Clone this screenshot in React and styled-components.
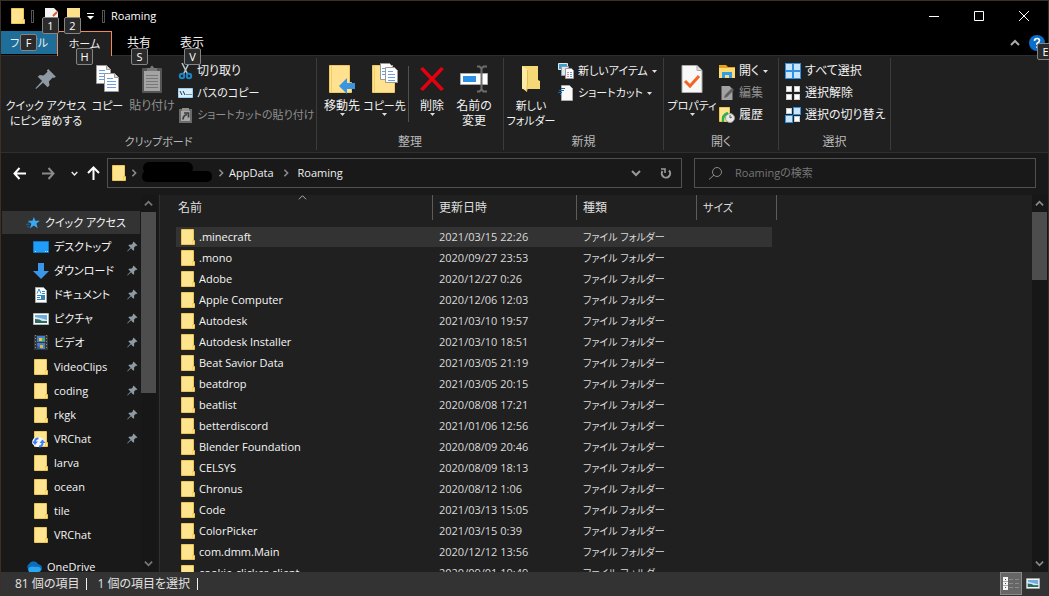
import React from "react";
import styled, { createGlobalStyle } from "styled-components";

const Global = createGlobalStyle`
  * { box-sizing: border-box; }
  html, body, #root { height: 100%; }
  body {
    margin: 0;
    background: #191919;
    color: #f0f0f0;
    font: 12px/16px "Open Sans", "Noto Sans CJK JP", sans-serif;
    font-feature-settings: "palt";
    overflow: hidden;
  }
  button, input { font: inherit; font-feature-settings: inherit; color: inherit; }
  button { background: none; border: 0; padding: 0; margin: 0; white-space: nowrap; }
  svg { display: block; flex: none; }
  ul, ol { list-style: none; margin: 0; padding: 0; }
`;

const Window = styled.div`
  height: 100vh;
  display: flex;
  flex-direction: column;
  border: solid #3c2f28;
  border-width: 1px 1px 0;
`;

/* Title bar */
const TitleBar = styled.header`
  flex: none;
  height: 30px;
  background: #000;
  display: flex;
  align-items: center;
  padding: 0 2px 0 10px;
`;
const TitleRule = styled.span`
  width: 3px;
  height: 13px;
  border: 1px solid #555;
  margin: 0 6px;
`;
const QuickButton = styled.button`
  position: relative;
  width: ${(p) => p.$width || 22}px;
  height: 22px;
  display: grid;
  place-items: center;
`;
const Title = styled.h1`
  margin: 0;
  flex: 1;
  font-size: 11px;
  line-height: 16px;
  font-weight: 400;
  color: #fff;
`;
const Caption = styled.button`
  width: 45px;
  height: 30px;
  display: grid;
  place-items: center;
`;
const KeyTip = styled.span`
  position: absolute;
  z-index: 2;
  left: ${(p) => p.$left}px;
  top: ${(p) => p.$top}px;
  width: 17px;
  height: 17px;
  border: 1px solid #858585;
  border-radius: 2px;
  background: #2b2b2b;
  color: #fff;
  font-size: 11px;
  line-height: 15px;
  text-align: center;
`;

/* Tabs */
const TabBar = styled.nav`
  flex: none;
  height: 24px;
  background: #000;
  display: flex;
`;
const Tab = styled.button`
  position: relative;
  width: ${(p) => p.$width}px;
  height: ${(p) => (p.$active ? 25 : 23)}px;
  font-size: ${(p) => (p.$kana ? 11 : 12)}px;
  line-height: 22px;
  background: ${(p) => (p.$file ? "#1e6e99" : p.$active ? "#202020" : "transparent")};
  border: solid ${(p) => (p.$active ? "#ef8a5c" : "transparent")};
  border-width: ${(p) => (p.$active ? "1px 1px 0" : "0")};
  z-index: ${(p) => (p.$active ? 1 : "auto")};
`;
const TabTools = styled.div`
  margin-left: auto;
  display: flex;
  align-items: center;
  gap: 9px;
`;
const HelpButton = styled.button`
  position: relative;
  width: 19px;
  height: 16px;
`;

/* Ribbon */
const Ribbon = styled.section`
  flex: none;
  height: 98px;
  display: flex;
  background: #202020;
  border-top: 1px solid #2d2d2d;
  border-bottom: 1px solid #2f2f2f;
`;
const Group = styled.div`
  flex: none;
  width: ${(p) => p.$width}px;
  display: flex;
  flex-direction: column;
  margin: 2px 0;
  border-right: 1px solid #3c3c3c;
`;
const GroupBody = styled.div`
  height: 76px;
  display: flex;
  padding: 2px 0 0 ${(p) => p.$pad}px;
`;
const GroupName = styled.div`
  text-align: center;
  color: #b8b8b8;
  font-size: ${(p) => (p.$kana ? 11 : 12)}px;
  line-height: 16px;
`;
const BigButton = styled.button`
  position: relative;
  width: ${(p) => p.$width}px;
  display: flex;
  flex-direction: column;
  align-items: center;
  font-size: ${(p) => (p.$kana ? 11 : 12)}px;
  line-height: 15px;
  color: ${(p) => (p.$off ? "#8f8f8f" : "#f2f2f2")};
`;
const BigIcon = styled.span`
  height: 38px;
  display: flex;
  align-items: center;
`;
const Divider = styled.span`
  width: 1px;
  height: 56px;
  margin: 6px 2px;
  background: #505050;
`;
const SmallColumn = styled.div`
  display: flex;
  flex-direction: column;
  padding-left: 2px;
`;
const SmallButton = styled.button`
  height: 22px;
  display: flex;
  align-items: center;
  gap: 4px;
  font-size: ${(p) => (p.$kana ? 11 : 12)}px;
  color: ${(p) => (p.$off ? "#8f8f8f" : "#f2f2f2")};
`;

/* Address row */
const AddressRow = styled.div`
  flex: none;
  height: 42px;
  display: flex;
  align-items: center;
  padding: 0 12px 2px 10px;
`;
const Arrow = styled.button`
  width: ${(p) => p.$width}px;
  height: 24px;
  display: grid;
  place-items: center;
`;
const AddressBox = styled.div`
  flex: 569;
  height: 30px;
  margin-right: 12px;
  border: 1px solid #505050;
  display: flex;
  align-items: center;
  padding-left: 4px;
`;
const Crumb = styled.button`
  color: #f0f0f0;
  font-size: 11px;
`;
const CrumbGap = styled.span`
  width: ${(p) => p.$width}px;
  display: grid;
  place-items: center;
`;
const AddressTools = styled.div`
  margin-left: auto;
  display: flex;
  align-items: center;
  height: 28px;
`;
const SearchBox = styled.label`
  flex: 326;
  height: 30px;
  border: 1px solid #505050;
  display: flex;
  align-items: center;
  gap: 13px;
  padding-left: 14px;
`;
const SearchInput = styled.input`
  flex: 1;
  min-width: 0;
  border: 0;
  padding: 0;
  outline: 0;
  background: transparent;
  font-size: 11px;
  &::placeholder { color: #777; opacity: 1; }
`;

/* Content */
const Body = styled.div`
  flex: 1;
  min-height: 0;
  display: flex;
`;
const Sidebar = styled.aside`
  flex: none;
  width: 159px;
  display: flex;
  border-right: 1px solid #303030;
  padding-right: 2px;
`;
const Tree = styled.ul`
  flex: 1;
  min-width: 0;
  padding: 16px 1px 0 1px;
  overflow: hidden;
`;
const TreeItem = styled.li`
  height: 24px;
  margin-top: ${(p) => (p.$gap ? 8 : 0)}px;
`;
const TreeLink = styled.a`
  height: 23px;
  display: flex;
  align-items: center;
  gap: 5px;
  padding: 0 2px 0 ${(p) => (p.$root ? 24 : 31)}px;
  background: ${(p) => (p.$selected ? "#333" : "transparent")};
  color: #f5f5f5;
  text-decoration: none;
  font-size: 11px;
  white-space: nowrap;
  & > span { flex: 1; }
`;
const ScrollTrack = styled.div`
  flex: none;
  width: 16px;
  background: #171717;
  display: flex;
  flex-direction: column;
  align-items: flex-start;
`;
const ScrollButton = styled.button`
  flex: none;
  height: 17px;
  width: 15px;
  display: grid;
  place-items: center;
`;
const Thumb = styled.div`
  width: 15px;
  height: ${(p) => p.$share}%;
  margin-bottom: auto;
  background: #4d4d4d;
`;
const Files = styled.main`
  flex: 1;
  min-width: 0;
  display: flex;
  background: #202020;
  overflow: hidden;
`;
const FileScroll = styled.div`
  flex: 1;
  overflow: hidden;
  padding-left: 16px;
`;
const Table = styled.table`
  width: 601px;
  table-layout: fixed;
  border-collapse: separate;
  border-spacing: 0;
`;
const Head = styled.th`
  position: relative;
  height: 25px;
  padding: 0 0 0 ${(p) => (p.$first ? 2 : 6)}px;
  border-right: 1px solid #5c5c5c;
  font-weight: 400;
  font-size: ${(p) => (p.$kana ? 11 : 12)}px;
  text-align: left;
  color: #dedede;
  & > svg { position: absolute; left: 122px; top: -2px; }
`;
const Spacer = styled.td`
  height: 7px;
  padding: 0;
`;
const Row = styled.tr`
  height: 21px;
  --row: ${(p) => (p.$selected ? "#333" : "transparent")};
`;
const Cell = styled.td`
  height: 21px;
  padding: 0 0 0 6px;
  border-bottom: 1px solid #202020;
  background: var(--row);
  color: #dadada;
  font-size: ${(p) => (p.$kana ? 10 : 11)}px;
  line-height: 16px;
  white-space: nowrap;
  &:last-child {
    padding: 0 5px 0 0;
    background-clip: content-box;
  }
`;
const FileName = styled.div`
  display: flex;
  align-items: center;
  gap: 4px;
  margin-left: -1px;
  color: #f5f5f5;
`;

/* Status bar */
const StatusBar = styled.footer`
  flex: none;
  height: 24px;
  background: #333;
  color: #e2e2e2;
  display: flex;
  align-items: center;
  padding: 0 4px 0 14px;
  & > span { padding-right: 7px; margin-right: 10px; line-height: 12px; border-right: 1px solid #f0f0f0; }
`;
const Views = styled.div`
  margin-left: auto;
  display: flex;
  height: 24px;
`;
const ViewButton = styled.button`
  width: 22px;
  height: 23px;
  display: grid;
  place-items: center;
  border: 1px solid ${(p) => (p.$on ? "#8a8a8a" : "transparent")};
  background: ${(p) => (p.$on ? "#666" : "transparent")};
`;

/* Icons */
const Folder = ({ sync }) => (
  <svg width="14" height="16" viewBox="0 0 14 16" overflow="visible">
    <path d="M.5.5h12v11h1v4H.5z" fill="#ffe48f" stroke="#eec54f" />
    <path d="M11.500 11v4" stroke="#f7d365" />
    {sync && (
      <g transform="translate(-2 0)">
        <path d="M0 12q0-6 6-6t7 6q-1 4-6 4t-7-4z" fill="#f6f8ff" />
        <path d="M6.500 7.500Q3 7 3 11.500M7 15.500q3.500 0 3.500-4" stroke="#3f7ff2" strokeWidth="2" fill="none" />
        <path d="M0 10.500h6l-3 3.500zM7.500 12h6l-3-3.500z" fill="#3f7ff2" />
      </g>
    )}
  </svg>
);
const Pin = ({ size = 11 }) => (
  <svg width={size} height={size} viewBox="0 0 20 20" fill="#8d9aa3">
    <path d="M12 1l7 7-1.800 1-1-.4-3.600 3.600.6 3.500-1.700 1.800-4.200-4.200L1 19l-.6-.6 6-6.500L2.500 8l1.800-1.700 3.500.6 3.600-3.600-.6-1z" />
  </svg>
);
const Chevron = ({ d = "down", color = "#cfcfcf", w = 9, sw = 2 }) => {
  const paths = { down: "M1 3l4 4 4-4", up: "M1 7l4-4 4 4", right: "M3 1l4 4-4 4" };
  return (
    <svg width={w} height={w} viewBox="0 0 10 10" fill="none" stroke={color} strokeWidth={sw}>
      <path d={paths[d]} />
    </svg>
  );
};
const Caret = () => (
  <svg width="5" height="3" viewBox="0 0 5 3"><path d="M0 0h5L2.500 3z" fill="#ddd" /></svg>
);
const Sheet = ({ x, y }) => (
  <g transform={`translate(${x} ${y})`}>
    <path d="M.5.5h10l4 4v14H.5z" fill="#fff" stroke="#9a9a9a" />
    <path d="M10.500.5v4h4" fill="#ddd" stroke="#9a9a9a" />
    <path d="M3 5.500h6M3 8.500h9M3 11.500h9M3 14.500h9" stroke="#6a9fe6" />
  </g>
);
const CopyIcon = () => (
  <svg width="26" height="30" viewBox="0 0 26 30"><Sheet x={1} y={1} /><Sheet x={9} y={9} /></svg>
);
const PasteIcon = () => (
  <svg width="22" height="30" viewBox="0 0 22 30">
    <rect x="1" y="4" width="20" height="25" rx="1" fill="#555" />
    <rect x="3" y="7" width="16" height="20" fill="#a4a4a4" />
    <path d="M6 7V4h3q2-5 4 0h3v3z" fill="#777" />
    <path d="M5 11.500h12M5 14.500h12M5 17.500h12M5 20.500h12M5 23.500h12" stroke="#777" />
  </svg>
);
const CutIcon = () => (
  <svg width="15" height="17" viewBox="0 0 15 17" fill="none">
    <path d="M4 0l5.500 11M11 0L5.500 11" stroke="#b9c6d0" strokeWidth="1.500" />
    <circle cx="4" cy="13" r="2.200" stroke="#1787c9" strokeWidth="2" />
    <circle cx="11" cy="13" r="2.200" stroke="#1787c9" strokeWidth="2" />
  </svg>
);
const PathIcon = () => (
  <svg width="15" height="10" viewBox="0 0 15 10">
    <path d="M.5.5h14v9H.5z" fill="#d9edfb" stroke="#9ad0f5" />
    <path d="M2 3l2 4M5 3l2 4M8.500 6.500h1M10.500 6.500h1M12.500 6.500h1" stroke="#14324a" />
  </svg>
);
const PasteLinkIcon = () => (
  <svg width="15" height="16" viewBox="0 0 15 16">
    <path d="M1 2h13v14H1z" fill="#6a6a6a" /><path d="M3 4h9v10H3z" fill="#a8a8a8" /><path d="M4 1h7v3H4z" fill="#909090" />
    <path d="M5 12.500q0-4 4-5M6 6h4.500v4.500" stroke="#3c3c3c" strokeWidth="1.700" fill="none" />
  </svg>
);
const BigFolder = ({ kind }) => (
  <svg width="28" height="32" viewBox="0 0 28 32">
    <path d="M1.500 2.500h20v17h2v10h-22z" fill="#ffe190" stroke="#eec860" />
    <path d="M3.500 3v26" stroke="#f3d067" />
    {kind === "move" ? (
      <path d="M11 23l8-8v5h8v6h-8v5z" fill="#3a96e3" />
    ) : (
      <g transform="translate(9 0)"><path d="M.5.500h9l3 3v13H.5z" fill="#fff" stroke="#999" /><path d="M2 5.500h3M2 8.500h3M2 11.500h3" stroke="#6a9fe6" /><path d="M5.500 4.500h9l3 3v12H5.500z" fill="#fff" stroke="#999" /><path d="M8 8.500h5M8 11.500h7M8 14.500h7M8 17.500h7" stroke="#6a9fe6" /></g>
    )}
  </svg>
);
const DeleteIcon = () => (
  <svg width="26" height="28" viewBox="0 0 26 28"><path d="M1 4l3-2 9 9.500L22 2l3 2-9.500 10L25 24l-3 2-9-9.500L4 26l-3-2 9.500-10z" fill="#e3000f" /></svg>
);
const RenameIcon = () => (
  <svg width="30" height="28" viewBox="0 0 30 28">
    <path d="M1.500 8.500h27v11h-27z" fill="#fff" stroke="#aaa" /><path d="M4 11h13v6H4z" fill="#2d8fe6" />
    <path d="M18 1.500h2.500l2 2 2-2H28M22.500 3v22M18 26.500h2.500l2-2 2 2H28" fill="none" stroke="#6c6c6c" strokeWidth="2" />
  </svg>
);
const NewFolderIcon = () => (
  <svg width="20" height="28" viewBox="0 0 20 28">
    <path d="M1 1h16v14l2 1v8H1z" fill="#f7d877" /><path d="M1 1l6 4v13l-1 9-5-4z" fill="#ffeaa5" /><path d="M6.500 5v14l-1 7" stroke="#e5bd51" fill="none" />
  </svg>
);
const NewItemIcon = () => (
  <svg width="16" height="16" viewBox="0 0 16 16">
    <path d="M.5.500h9v6h-9z" fill="#3aa0cc" stroke="#e1e9ef" /><path d="M3.500 3.500h7v9h-7z" fill="#dce7ef" stroke="#8f9aa3" />
    <path d="M7.500 5.500h6l2 2v8h-8z" fill="#fff" stroke="#999" /><path d="M9 9.500h2M9 11.500h2M9 13.500h2" stroke="#dd8a8a" /><path d="M12 9.500h2M12 11.500h2M12 13.500h2" stroke="#6a9fe6" />
  </svg>
);
const ShortcutIcon = () => (
  <svg width="16" height="16" viewBox="0 0 16 16">
    <path d="M3.500.500h8l3 3v12h-11z" fill="#fafafa" stroke="#aaa" /><path d="M3 3.500h4M1 5.500h5M0 7.500h4M2 9.500h1" stroke="#1565ad" strokeWidth="1.200" />
  </svg>
);
const PropertiesIcon = () => (
  <svg width="22" height="30" viewBox="0 0 22 30">
    <path d="M1 1.500h15l5 5v22H1z" fill="#f8f8f8" stroke="#aaa" /><path d="M16 1.500v5h5" fill="#ddd" stroke="#aaa" />
    <path d="M4 17l5 5 9-10" fill="none" stroke="#f26522" strokeWidth="3" />
  </svg>
);
const OpenIcon = () => (
  <svg width="16" height="15" viewBox="0 0 16 15">
    <path d="M0 1h7l2 2h7v4H0z" fill="#e5a31b" /><path d="M0 4h16v10H0z" fill="#ffdc73" /><path d="M3 8h10v6h-3v-3H6v3H3z" fill="#359de8" />
  </svg>
);
const EditIcon = () => (
  <svg width="16" height="16" viewBox="0 0 16 16"><path d="M2.500 1h8l3 3v11h-11z" fill="#a2a2a2" /><path d="M5 13l1-3 7-7 2 2-7 7z" fill="#5f5f5f" /></svg>
);
const HistoryIcon = () => (
  <svg width="16" height="16" viewBox="0 0 16 16">
    <path d="M.5.500h10v14H.5z" fill="#ffe48f" stroke="#eec54f" /><circle cx="11" cy="11" r="4.500" fill="#e8e8e8" stroke="#9a9a9a" />
    <path d="M11 8v3l2-1" stroke="#555" fill="none" /><path d="M4 15q-1-7 5-9" stroke="#2bb24c" strokeWidth="2.500" fill="none" />
  </svg>
);
const SelectIcon = ({ on }) => (
  <svg width="16" height="16" viewBox="0 0 16 16">
    {[[0, 0], [8, 0], [0, 8], [8, 8]].map(([x, y], i) => on.includes(i)
      ? <g key={i}><rect x={x} y={y} width="8" height="8" fill="#2f91df" /><rect x={x + 1} y={y + 1} width="6" height="6" fill="#c8e5fb" /></g>
      : <rect key={i} x={x + 1.5} y={y + 1.5} width="5" height="5" fill="#fff" stroke="#ccc" />)}
  </svg>
);
const Straight = ({ rotate = 0, color = "#fff" }) => (
  <svg width="13" height="13" viewBox="0 0 13 13" fill="none" stroke={color} strokeWidth="2">
    <g transform={`rotate(${rotate} 6.5 6.5)`}><path d="M13 6.500H1.500M6.500 1L1.500 6.500l5 5.500" /></g>
  </svg>
);
const StarIcon = () => (
  <svg width="14" height="12" viewBox="0 0 16 14">
    <path d="M9 0l1.700 4.500H16l-4 3 1.500 5.500L9 10l-4.500 3.500L6 8 2 4.500h5.300z" fill="#39a9f2" /><path d="M0 8.500h4M2 6.500h3M1 11.500h3" stroke="#1875bb" />
  </svg>
);
const DesktopIcon = () => (
  <svg width="16" height="12" viewBox="0 0 16 12"><path d="M.5.500h15v11H.5z" fill="#1e9dfb" stroke="#1374c3" /><path d="M2 10.500h1M12 10.500h1M14 10.500h1" stroke="#bfe3ff" /></svg>
);
const DownloadIcon = () => (
  <svg width="16" height="16" viewBox="0 0 16 16"><path d="M5 0h6v8h5l-8 8-8-8h5z" fill="#3a96e6" /></svg>
);
const DocIcon = () => (
  <svg width="16" height="16" viewBox="0 0 16 16">
    <path d="M2.500.500h8l3 3v12h-11z" fill="#fff" stroke="#aaa" /><path d="M4 6.500L6 2l2 4.500M9 4.500h3M9 6.500h3M4 8.500h8M4 10.500h3M4 12.500h8" stroke="#2b8bd0" fill="none" /><path d="M8 9h4v3H8z" fill="#3f84a8" />
  </svg>
);
const PictureIcon = ({ w = 16, h = 12 }) => (
  <svg width={w} height={h} viewBox="0 0 16 12">
    <path d="M.5.500h15v11H.5z" fill="#fff" stroke="#b5b5b5" /><path d="M2 2h12v8H2z" fill="#6eaedc" /><path d="M2 4l5 1 7 2v1H2z" fill="#d8e9f2" /><path d="M2 6q5 0 7 2h5v2H2z" fill="#2f6a60" />
  </svg>
);
const VideoIcon = () => (
  <svg width="16" height="15" viewBox="0 0 16 15">
    <path d="M1 0h14v15H1z" fill="#383838" /><path d="M4 1h8v6H4zM4 8h8v6H4z" fill="#3e7fd0" />
    <path d="M6 3h3v3H6z" fill="#e9c43c" /><path d="M9 3h3v3H9z" fill="#4fae4f" /><path d="M4 10l4 4H4z" fill="#2d5c9c" /><path d="M7 10h3v3H7z" fill="#d9b93b" />
    <path d="M2.500 0v15M13.500 0v15" stroke="#888" strokeDasharray="1 2" />
  </svg>
);
const CloudIcon = () => (
  <svg width="16" height="11" viewBox="0 0 16 11"><path d="M3 9a3.500 3.500 0 0 1 0-6 5 5 0 0 1 9 0q4 1 4 4t-4 4H4z" fill="#0f6cbd" /><path d="M3 11q-2-3 1-5 3-1 5 0 5-1 6 2 0 3-3 3z" fill="#29a7ef" /></svg>
);
const DetailsIcon = () => (
  <svg width="16" height="13" viewBox="0 0 16 13">
    <path d="M0 0h5v13H0z" fill="#f4f4f4" /><path d="M0 4.500h5M0 8.500h5" stroke="#aaa" /><path d="M2 2.500h1M2 6.500h1" stroke="#444" /><path d="M2 10.500h1" stroke="#a33" /><path d="M6 2.500h4M12 2.500h4M6 6.500h4M12 6.500h4M6 10.500h4M12 10.500h4" stroke="#8a8a8a" />
  </svg>
);
const RefreshIcon = () => (
  <svg width="12" height="12" viewBox="0 0 12 12" fill="none" stroke="#999" strokeWidth="2">
    <path d="M9 3.500A4.200 4.200 0 1 1 2.500 4" />
    <path d="M1 2h4v4" strokeWidth="1.600" />
  </svg>
);

const places = [
  ["デスクトップ", <DesktopIcon />, true],
  ["ダウンロード", <DownloadIcon />, true],
  ["ドキュメント", <DocIcon />, true],
  ["ピクチャ", <PictureIcon />, true],
  ["ビデオ", <VideoIcon />, true],
  ["VideoClips", <Folder />, true],
  ["coding", <Folder />, true],
  ["rkgk", <Folder />, true],
  ["VRChat", <Folder sync />, true],
  ["larva", <Folder />],
  ["ocean", <Folder />],
  ["tile", <Folder />],
  ["VRChat", <Folder />],
];
const PlaceIcon = styled.span`
  &&& { flex: none; }
  width: 16px;
  display: grid;
  place-items: center;
`;

const files = [
  [".minecraft", "2021/03/15 22:26"],
  [".mono", "2020/09/27 23:53"],
  ["Adobe", "2020/12/27 0:26"],
  ["Apple Computer", "2020/12/06 12:03"],
  ["Autodesk", "2021/03/10 19:57"],
  ["Autodesk Installer", "2021/03/10 18:51"],
  ["Beat Savior Data", "2021/03/05 21:19"],
  ["beatdrop", "2021/03/05 20:15"],
  ["beatlist", "2020/08/08 17:21"],
  ["betterdiscord", "2021/01/06 12:56"],
  ["Blender Foundation", "2020/08/09 20:46"],
  ["CELSYS", "2020/08/09 18:13"],
  ["Chronus", "2020/08/12 1:06"],
  ["Code", "2021/03/13 15:05"],
  ["ColorPicker", "2021/03/15 0:39"],
  ["com.dmm.Main", "2020/12/12 13:56"],
  ["cookie-clicker-client", "2020/09/01 19:49"],
];

const Big = ({ icon, lines, menu, ...rest }) => (
  <BigButton {...rest}>
    <BigIcon>{icon}</BigIcon>
    {lines.map((l) => <span key={l}>{l}</span>)}
    {menu && <Caret />}
  </BigButton>
);
const Small = ({ icon, text, menu, ...rest }) => (
  <SmallButton {...rest}>{icon}<span>{text}</span>{menu && <Caret />}</SmallButton>
);

export default function App() {
  return (
    <>
      <Global />
      <Window>
        <TitleBar>
          <Folder />
          <TitleRule />
          <QuickButton aria-label="プロパティ">
            <svg width="13" height="16" viewBox="0 0 13 16"><path d="M0 0h9l4 4v12H0z" fill="#f4f4f4" /><path d="M8 8l4-4" stroke="#e2582a" strokeWidth="2" /></svg>
            <KeyTip $left={2} $top={12}>1</KeyTip>
          </QuickButton>
          <QuickButton aria-label="新しいフォルダー">
            <svg width="13" height="16" viewBox="0 0 13 16"><path d="M0 0h13v16H0z" fill="#ffe08a" /></svg>
            <KeyTip $left={2} $top={12}>2</KeyTip>
          </QuickButton>
          <QuickButton $width={12} aria-label="カスタマイズ">
            <svg width="7" height="7" viewBox="0 0 7 7"><path d="M0 .5h7" stroke="#fff" /><path d="M0 3h7L3.500 6.500z" fill="#fff" /></svg>
          </QuickButton>
          <TitleRule />
          <Title>Roaming</Title>
          <Caption aria-label="最小化"><svg width="10" height="10"><path d="M0 5.500h10" stroke="#fff" /></svg></Caption>
          <Caption aria-label="最大化"><svg width="10" height="10"><path d="M.5.500h9v9h-9z" fill="none" stroke="#fff" /></svg></Caption>
          <Caption aria-label="閉じる"><svg width="10" height="10"><path d="M0 0l10 10M10 0L0 10" stroke="#fff" /></svg></Caption>
        </TitleBar>

        <TabBar>
          <Tab $width={56} $file $kana>ファイル<KeyTip $left={19} $top={3}>F</KeyTip></Tab>
          <Tab $width={55} $active $kana>ホーム<KeyTip $left={18} $top={16}>H</KeyTip></Tab>
          <Tab $width={54}>共有<KeyTip $left={19} $top={17}>S</KeyTip></Tab>
          <Tab $width={52}>表示<KeyTip $left={18} $top={17}>V</KeyTip></Tab>
          <TabTools>
            <Chevron d="up" w={10} color="#aaa" />
            <HelpButton aria-label="ヘルプ">
              <svg width="16" height="16" viewBox="0 0 16 16"><circle cx="8" cy="8" r="8" fill="#0b6fcb" /><path d="M5.500 6q0-2.500 2.500-2.500t2.500 2q0 1.500-2.500 3V10M8 11.500v1.500" fill="none" stroke="#fff" strokeWidth="1.600" /></svg>
              <KeyTip $left={8} $top={8}>E</KeyTip>
            </HelpButton>
          </TabTools>
        </TabBar>

        <Ribbon>
          <Group $width={316}>
            <GroupBody $pad={4}>
              <Big $width={82} $kana icon={<Pin size={22} />} lines={["クイック アクセス", "にピン留めする"]} />
              <Big $width={41} $kana icon={<CopyIcon />} lines={["コピー"]} />
              <Big $width={48} $off icon={<PasteIcon />} lines={["貼り付け"]} />
              <SmallColumn>
                <Small icon={<CutIcon />} text="切り取り" />
                <Small $kana icon={<PathIcon />} text="パスのコピー" />
                <Small $kana $off icon={<PasteLinkIcon />} text="ショートカットの貼り付け" />
              </SmallColumn>
            </GroupBody>
            <GroupName $kana>クリップボード</GroupName>
          </Group>
          <Group $width={187}>
            <GroupBody $pad={4}>
              <Big $width={42} menu icon={<BigFolder kind="move" />} lines={["移動先"]} />
              <Big $width={43} menu icon={<BigFolder kind="copy" />} lines={["コピー先"]} $kana />
              <Divider />
              <Big $width={42} menu icon={<DeleteIcon />} lines={["削除"]} />
              <Big $width={42} icon={<RenameIcon />} lines={["名前の", "変更"]} />
            </GroupBody>
            <GroupName>整理</GroupName>
          </Group>
          <Group $width={160}>
            <GroupBody $pad={2}>
              <Big $width={50} $kana icon={<NewFolderIcon />} lines={["新しい", "フォルダー"]} />
              <SmallColumn>
                <Small $kana menu icon={<NewItemIcon />} text="新しいアイテム" />
                <Small $kana menu icon={<ShortcutIcon />} text="ショートカット" />
              </SmallColumn>
            </GroupBody>
            <GroupName>新規</GroupName>
          </Group>
          <Group $width={115}>
            <GroupBody $pad={3}>
              <Big $width={50} $kana menu icon={<PropertiesIcon />} lines={["プロパティ"]} />
              <SmallColumn>
                <Small menu icon={<OpenIcon />} text="開く" />
                <Small $off icon={<EditIcon />} text="編集" />
                <Small icon={<HistoryIcon />} text="履歴" />
              </SmallColumn>
            </GroupBody>
            <GroupName>開く</GroupName>
          </Group>
          <Group $width={112}>
            <GroupBody $pad={4}>
              <SmallColumn>
                <Small icon={<SelectIcon on={[0, 1, 2, 3]} />} text="すべて選択" />
                <Small icon={<SelectIcon on={[]} />} text="選択解除" />
                <Small icon={<SelectIcon on={[1, 2]} />} text="選択の切り替え" />
              </SmallColumn>
            </GroupBody>
            <GroupName>選択</GroupName>
          </Group>
        </Ribbon>

        <AddressRow>
          <Arrow $width={16} aria-label="戻る"><Straight /></Arrow>
          <Arrow $width={42} aria-label="進む"><Straight rotate={180} color="#8a8a8a" /></Arrow>
          <Arrow $width={10} aria-label="最近の場所"><Chevron w={7} color="#eee" /></Arrow>
          <Arrow $width={28} aria-label="上へ"><svg width="13" height="14" viewBox="0 0 13 14" fill="none" stroke="#fff" strokeWidth="2"><path d="M6.500 14V2M1 7l5.500-5.500L12 7" /></svg></Arrow>
          <AddressBox>
            <Folder />
            <CrumbGap $width={16}><Chevron d="right" color="#8a8a8a" w={8} /></CrumbGap>
            <svg width="70" height="22" viewBox="0 0 70 22"><rect x="1" y="0" width="50" height="12" rx="6" /><rect x="0" y="9" width="70" height="11" rx="5" /></svg>
            <CrumbGap $width={17}><Chevron d="right" color="#8a8a8a" w={8} /></CrumbGap>
            <Crumb>AppData</Crumb>
            <CrumbGap $width={24}><Chevron d="right" color="#8a8a8a" w={8} /></CrumbGap>
            <Crumb>Roaming</Crumb>
            <AddressTools>
              <Arrow $width={30} aria-label="以前の場所"><Chevron color="#999" w={10} /></Arrow>
              <Arrow $width={30} aria-label="更新"><RefreshIcon /></Arrow>
            </AddressTools>
          </AddressBox>
          <SearchBox>
            <svg width="13" height="13" viewBox="0 0 13 13" fill="none" stroke="#888"><circle cx="8" cy="5" r="4.500" /><path d="M5 8L0 12.500" /></svg>
            <SearchInput placeholder="Roamingの検索" aria-label="Roamingの検索" />
          </SearchBox>
        </AddressRow>

        <Body>
          <Sidebar>
            <Tree>
              <TreeItem>
                <TreeLink href="#quick" $root $selected><StarIcon /><span>クイック アクセス</span></TreeLink>
              </TreeItem>
              {places.map(([name, icon, pinned], i) => (
                <TreeItem key={i}>
                  <TreeLink href={`#place-${i}`}>
                    <PlaceIcon>{icon}</PlaceIcon>
                    <span>{name}</span>
                    {pinned && <Pin />}
                  </TreeLink>
                </TreeItem>
              ))}
              <TreeItem $gap>
                <TreeLink href="#onedrive" $root><CloudIcon /><span>OneDrive</span></TreeLink>
              </TreeItem>
            </Tree>
            <ScrollTrack>
              <ScrollButton aria-label="上へスクロール"><Chevron d="up" color="#777" /></ScrollButton>
              <Thumb $share={48} />
              <ScrollButton aria-label="下へスクロール"><Chevron color="#777" /></ScrollButton>
            </ScrollTrack>
          </Sidebar>
          <Files>
            <FileScroll>
              <Table>
                <colgroup><col width="257" /><col width="144" /><col width="120" /><col width="80" /></colgroup>
                <thead>
                  <tr>
                    <Head $first>名前<Chevron d="up" sw={1} color="#bbb" /></Head>
                    <Head>更新日時</Head>
                    <Head>種類</Head>
                    <Head $kana>サイズ</Head>
                  </tr>
                </thead>
                <tbody>
                  <tr><Spacer colSpan={4} /></tr>
                  {files.map(([name, date], i) => (
                    <Row key={name} $selected={i === 0}>
                      <Cell><FileName><Folder /><span>{name}</span></FileName></Cell>
                      <Cell>{date}</Cell>
                      <Cell $kana>ファイル フォルダー</Cell>
                      <Cell />
                    </Row>
                  ))}
                </tbody>
              </Table>
            </FileScroll>
            <ScrollTrack>
              <ScrollButton aria-label="上へスクロール"><Chevron d="up" color="#888" /></ScrollButton>
              <Thumb $share={18} />
              <ScrollButton aria-label="下へスクロール"><Chevron color="#888" /></ScrollButton>
            </ScrollTrack>
          </Files>
        </Body>

        <StatusBar>
          <span>81 個の項目</span>
          <span>1 個の項目を選択</span>
          <Views>
            <ViewButton $on aria-label="詳細"><DetailsIcon /></ViewButton>
            <ViewButton aria-label="大アイコン"><PictureIcon w={14} h={11} /></ViewButton>
          </Views>
        </StatusBar>
      </Window>
    </>
  );
}
